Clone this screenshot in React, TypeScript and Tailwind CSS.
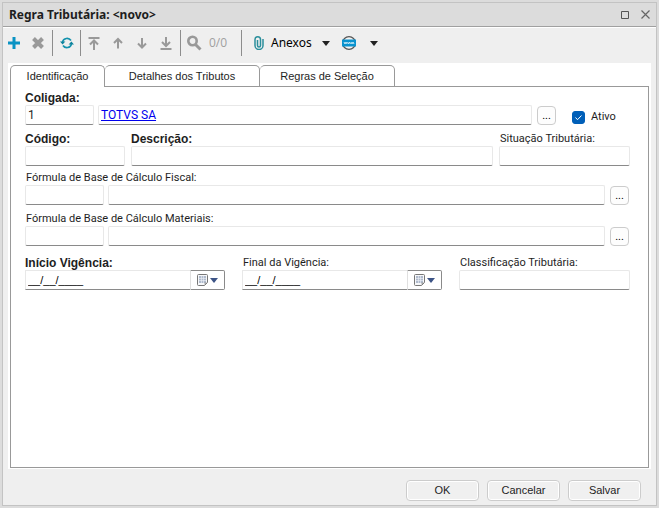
import React, { useState } from "react";
import clsx from "clsx";

const inputStyle =
  "h-5 w-full min-w-0 border border-[#e8e8e8] border-b-[#8a8a8a] rounded-[2px] bg-white px-[2px] text-[12px] leading-4 outline-none";

interface FieldProps {
  id: string;
  label: string;
  bold?: boolean;
  className?: string;
  children: React.ReactNode;
}

const Field: React.FC<FieldProps> = ({
  id,
  label,
  bold,
  className,
  children,
}) => {
  return (
    <div className={clsx("flex flex-col", className)}>
      <label
        htmlFor={id}
        className={clsx(
          "h-[14px] whitespace-nowrap leading-[14px]",
          bold
            ? "font-['Liberation_Sans',sans-serif] text-[12px] font-bold"
            : "pl-px text-[11px]"
        )}
      >
        {label}
      </label>
      {children}
    </div>
  );
};

const MoreButton: React.FC<{ label: string }> = ({ label }) => {
  return (
    <button
      type="button"
      aria-label={label}
      className="h-[19px] w-[19px] shrink-0 self-end rounded border border-[#cccccc] bg-[#fdfdfd] text-[11px] leading-4 text-black"
    >
      ...
    </button>
  );
};

const Caret: React.FC<{ color: string }> = ({ color }) => {
  return (
    <svg width="8" height="5" viewBox="0 0 8 5" fill={color}>
      <path d="M0 0h8L4 5z" />
    </svg>
  );
};

const DateInput: React.FC<{ id: string }> = ({ id }) => {
  return (
    <div className="flex h-5">
      <input
        id={id}
        defaultValue="__/__/____"
        className="w-full min-w-0 border border-r-0 border-[#e8e8e8] border-b-[#8a8a8a] bg-white px-[2px] font-['Liberation_Sans',sans-serif] text-[11px] text-black outline-none"
      />
      <button
        type="button"
        aria-label="Abrir calendário"
        className="flex w-[35px] shrink-0 items-center justify-center gap-[2px] rounded-r-[2px] border border-[#8a8a8a] border-l-[#e0e0e0]"
      >
        <svg width="11" height="12" viewBox="0 0 11 12">
          <path
            d="M1.5 .5h8a1 1 0 0 1 1 1v7l-3 3h-6a1 1 0 0 1-1-1v-9a1 1 0 0 1 1-1z"
            fill="#f7f8fa"
            stroke="#777"
          />
          <path d="M2 2h7v7H2z" fill="#b0bbcd" />
          <path
            d="M2 4.5h7M2 6.5h7M4.5 2v7M6.5 2v7"
            stroke="#eef1f6"
            strokeWidth=".6"
          />
          <path d="M7.5 11V8.5H10z" fill="#999" />
        </svg>
        <Caret color="#3d5486" />
      </button>
    </div>
  );
};

const Separator = () => <span className="h-[26px] w-px bg-[#8d8d8d]" />;

interface ToolProps {
  label: string;
  className?: string;
  children: React.ReactNode;
}

const Tool: React.FC<ToolProps> = ({ label, className, children }) => {
  return (
    <button
      type="button"
      aria-label={label}
      className={clsx("flex h-6 shrink-0 items-center justify-center", className)}
    >
      {children}
    </button>
  );
};

const arrows = [
  { label: "Primeiro", d: "M1.5 2h11M7 14V5M3 8.5l4-4 4 4" },
  { label: "Anterior", d: "M7 12.5V3M3 7l4-4 4 4" },
  { label: "Próximo", d: "M7 2v9.5M3 7.5l4 4 4-4" },
  { label: "Último", d: "M1.5 13h11M7 1v8.5M3 6l4 4 4-4" },
];

const Toolbar = () => {
  return (
    <div className="flex h-[35px] items-start pt-[2px]">
      <div className="flex h-[26px] items-center">
        <Tool label="Novo" className="ml-[2px] w-[18px]">
          <svg width="12" height="12" viewBox="0 0 12 12">
            <path d="M6 0v12M0 6h12" stroke="#0a93c4" strokeWidth="3" />
          </svg>
        </Tool>
        <Tool label="Excluir" className="ml-[3px] mr-[2px] w-6">
          <svg width="12" height="12" viewBox="0 0 12 12">
            <path d="M1.5 1.5l9 9M10.5 1.5l-9 9" stroke="#999" strokeWidth="4" />
          </svg>
        </Tool>
        <Separator />
        <Tool label="Atualizar" className="mx-px w-[25px]">
          <svg width="14" height="12" viewBox="0 0 14 12" fill="none">
            <path
              d="M2.5 5A4.7 4.7 0 0 1 11 3.5M11.5 7A4.7 4.7 0 0 1 3 8.5"
              stroke="#1492ad"
              strokeWidth="1.6"
            />
            <path d="M0 4.5h5.4L2.6 7.6zM14 7.5H8.6l2.8-3.1z" fill="#0d829c" />
          </svg>
        </Tool>
        <Separator />
        {arrows.map((arrow, i) => (
          <Tool
            key={arrow.label}
            label={arrow.label}
            className={clsx("w-6", i === 0 && "ml-px")}
          >
            <svg width="14" height="14" viewBox="0 0 14 14" fill="none">
              <path d={arrow.d} stroke="#999" strokeWidth="2" />
            </svg>
          </Tool>
        ))}
        <span className="w-[2px]" />
        <Separator />
        <Tool label="Localizar" className="ml-px w-6">
          <svg width="16" height="16" viewBox="0 0 16 16" fill="none">
            <circle cx="6.5" cy="6" r="4.2" stroke="#999" strokeWidth="2.6" />
            <path d="M9.5 9.5l5 5" stroke="#999" strokeWidth="3" />
          </svg>
        </Tool>
        <span className="ml-[3px] w-8 font-['Open_Sans',sans-serif] text-[12px] text-[#a0a0a0]">
          0/0
        </span>
        <Separator />
        <button
          type="button"
          className="ml-3 flex items-center font-['Noto_Sans',sans-serif] text-[12px] text-black"
        >
          <svg width="10" height="14" viewBox="0 0 10 14" fill="none">
            <path
              d="M3.5 4v5.5a1.5 1.5 0 0 0 3 0V3.5a2.7 2.7 0 0 0-5.5 0V9.5a4 4 0 0 0 8 0V3"
              stroke="#2b8f9c"
              strokeWidth="1.5"
            />
          </svg>
          <span className="ml-[7px] mr-[10px]">Anexos</span>
          <Caret color="#222" />
        </button>
        <Tool label="Links" className="ml-[7px] w-6">
          <svg width="14" height="14" viewBox="0 0 14 14">
            <circle cx="7" cy="7" r="6.4" fill="#f4f4f4" stroke="#555" strokeWidth="1.2" />
            <path d="M0 3.5h14v7H0z" fill="#0a93cf" />
            <path
              d="M2 6l1 2 1-2 1 2M5.5 6l1 2 1-2 1 2M9 6l1 2 1-2 1 2"
              fill="none"
              stroke="#d9f1fb"
              strokeWidth=".9"
            />
          </svg>
        </Tool>
        <Tool label="Mais opções" className="ml-px w-6">
          <Caret color="#222" />
        </Tool>
      </div>
    </div>
  );
};

const tabs = [
  { name: "Identificação", width: "w-[95px]" },
  { name: "Detalhes dos Tributos", width: "w-[155px]" },
  { name: "Regras de Seleção", width: "w-[135px]" },
];

const App = () => {
  const [active, setActive] = useState(0);
  const [ativo, setAtivo] = useState(true);

  return (
    <div className="flex min-h-screen flex-col bg-[#dcdcdc] p-[2px] font-[Roboto,sans-serif] text-[#1e1e1e]">
      <div className="flex flex-1 flex-col border border-[#c3c3c3] bg-[#efefef]">
        <header className="flex h-6 items-center border-b border-[#a0a0a0] bg-[#dcdcdc] px-[6px]">
          <h1 className="flex-1 font-['Noto_Sans',sans-serif] text-[12px] font-bold">
            Regra Tributária: &lt;novo&gt;
          </h1>
          <button type="button" aria-label="Maximizar" className="mr-3">
            <svg width="8" height="8" viewBox="0 0 8 8" fill="none">
              <path d="M.5 .5h7v7h-7z" stroke="#555" />
            </svg>
          </button>
          <button type="button" aria-label="Fechar">
            <svg width="9" height="9" viewBox="0 0 9 9">
              <path d="M.5 .5l8 8M8.5 .5l-8 8" stroke="#666" strokeWidth="1.2" />
            </svg>
          </button>
        </header>

        <div className="border-t border-white">
          <Toolbar />
        </div>

        <main className="mx-[5px] flex flex-1 flex-col bg-white px-[2px] pb-px pt-[2px]">
          <div role="tablist" className="flex h-[22px]">
            {tabs.map((tab, i) => (
              <button
                key={tab.name}
                type="button"
                role="tab"
                aria-selected={active === i}
                onClick={() => setActive(i)}
                className={clsx(
                  "shrink-0 rounded-t-[5px] border-r border-t border-[#999999] font-['Liberation_Sans',sans-serif] text-[11px]",
                  tab.width,
                  i === 0 && "border-l",
                  active === i ? "pb-px" : "border-b"
                )}
              >
                {tab.name}
              </button>
            ))}
            <span className="flex-1 border-b border-[#999999]" />
          </div>

          <div className="flex-1 border border-t-0 border-[#999999] pl-[14px] pr-[18px] pt-1">
            <div className="flex items-end">
              <Field id="coligada" label="Coligada:" bold className="w-[69px]">
                <input id="coligada" defaultValue="1" className={inputStyle} />
              </Field>
              <div className="ml-1 flex h-5 min-w-0 flex-1 items-center rounded-[2px] border border-[#e8e8e8] border-b-[#8a8a8a] px-[2px] text-[12px]">
                <a href="#" className="text-[#0000ee] underline">
                  TOTVS SA
                </a>
              </div>
              <div className="ml-[5px] flex">
                <MoreButton label="Buscar coligada" />
              </div>
              <label className="ml-4 flex h-4 w-[58px] items-center gap-[6px] self-end text-[11px]">
                <span className="relative flex h-[13px] w-[13px]">
                  <input
                    type="checkbox"
                    checked={ativo}
                    onChange={(e) => setAtivo(e.target.checked)}
                    className="h-[13px] w-[13px] appearance-none rounded-[3px] border border-[#005fb8] checked:bg-[#005fb8]"
                  />
                  <svg
                    viewBox="0 0 13 13"
                    fill="none"
                    className="pointer-events-none absolute inset-0"
                  >
                    <path d="M3.5 6.5l2 2.2 4-4.2" stroke="#fff" />
                  </svg>
                </span>
                Ativo
              </label>
            </div>

            <div className="mt-[7px] flex gap-[6px]">
              <Field id="codigo" label="Código:" bold className="w-[100px]">
                <input id="codigo" className={inputStyle} />
              </Field>
              <Field id="descricao" label="Descrição:" bold className="flex-1">
                <input id="descricao" className={inputStyle} />
              </Field>
              <Field id="situacao" label="Situação Tributária:" className="w-[131px]">
                <input id="situacao" className={inputStyle} />
              </Field>
            </div>

            <div className="mr-px mt-[5px] flex">
              <Field id="fiscal" label="Fórmula de Base de Cálculo Fiscal:" className="w-[79px]">
                <input id="fiscal" className={inputStyle} />
              </Field>
              <div className="ml-1 mr-[5px] flex flex-1 items-end">
                <input aria-label="Descrição da fórmula fiscal" className={inputStyle} />
              </div>
              <MoreButton label="Buscar fórmula fiscal" />
            </div>

            <div className="mr-px mt-[7px] flex">
              <Field id="materiais" label="Fórmula de Base de Cálculo Materiais:" className="w-[79px]">
                <input id="materiais" className={inputStyle} />
              </Field>
              <div className="ml-1 mr-[5px] flex flex-1 items-end">
                <input aria-label="Descrição da fórmula materiais" className={inputStyle} />
              </div>
              <MoreButton label="Buscar fórmula materiais" />
            </div>

            <div className="mt-[10px] flex gap-[17px]">
              <Field id="inicio" label="Início Vigência:" bold className="flex-1">
                <DateInput id="inicio" />
              </Field>
              <Field id="final" label="Final da Vigência:" className="flex-1">
                <DateInput id="final" />
              </Field>
              <Field id="classificacao" label="Classificação Tributária:" className="w-[171px]">
                <input id="classificacao" className={inputStyle} />
              </Field>
            </div>
          </div>
        </main>

        <footer className="flex justify-end gap-2 pb-1 pr-[15px] pt-[11px]">
          {["OK", "Cancelar", "Salvar"].map((name) => (
            <button
              key={name}
              type="button"
              className="h-[21px] w-[73px] rounded border border-[#cccccc] bg-white p-px font-['Liberation_Sans',sans-serif] text-[11px]"
            >
              <span className="flex h-full items-center justify-center rounded-[2px] bg-[#f0f0f0]">
                {name}
              </span>
            </button>
          ))}
        </footer>
      </div>
    </div>
  );
};

export default App;
